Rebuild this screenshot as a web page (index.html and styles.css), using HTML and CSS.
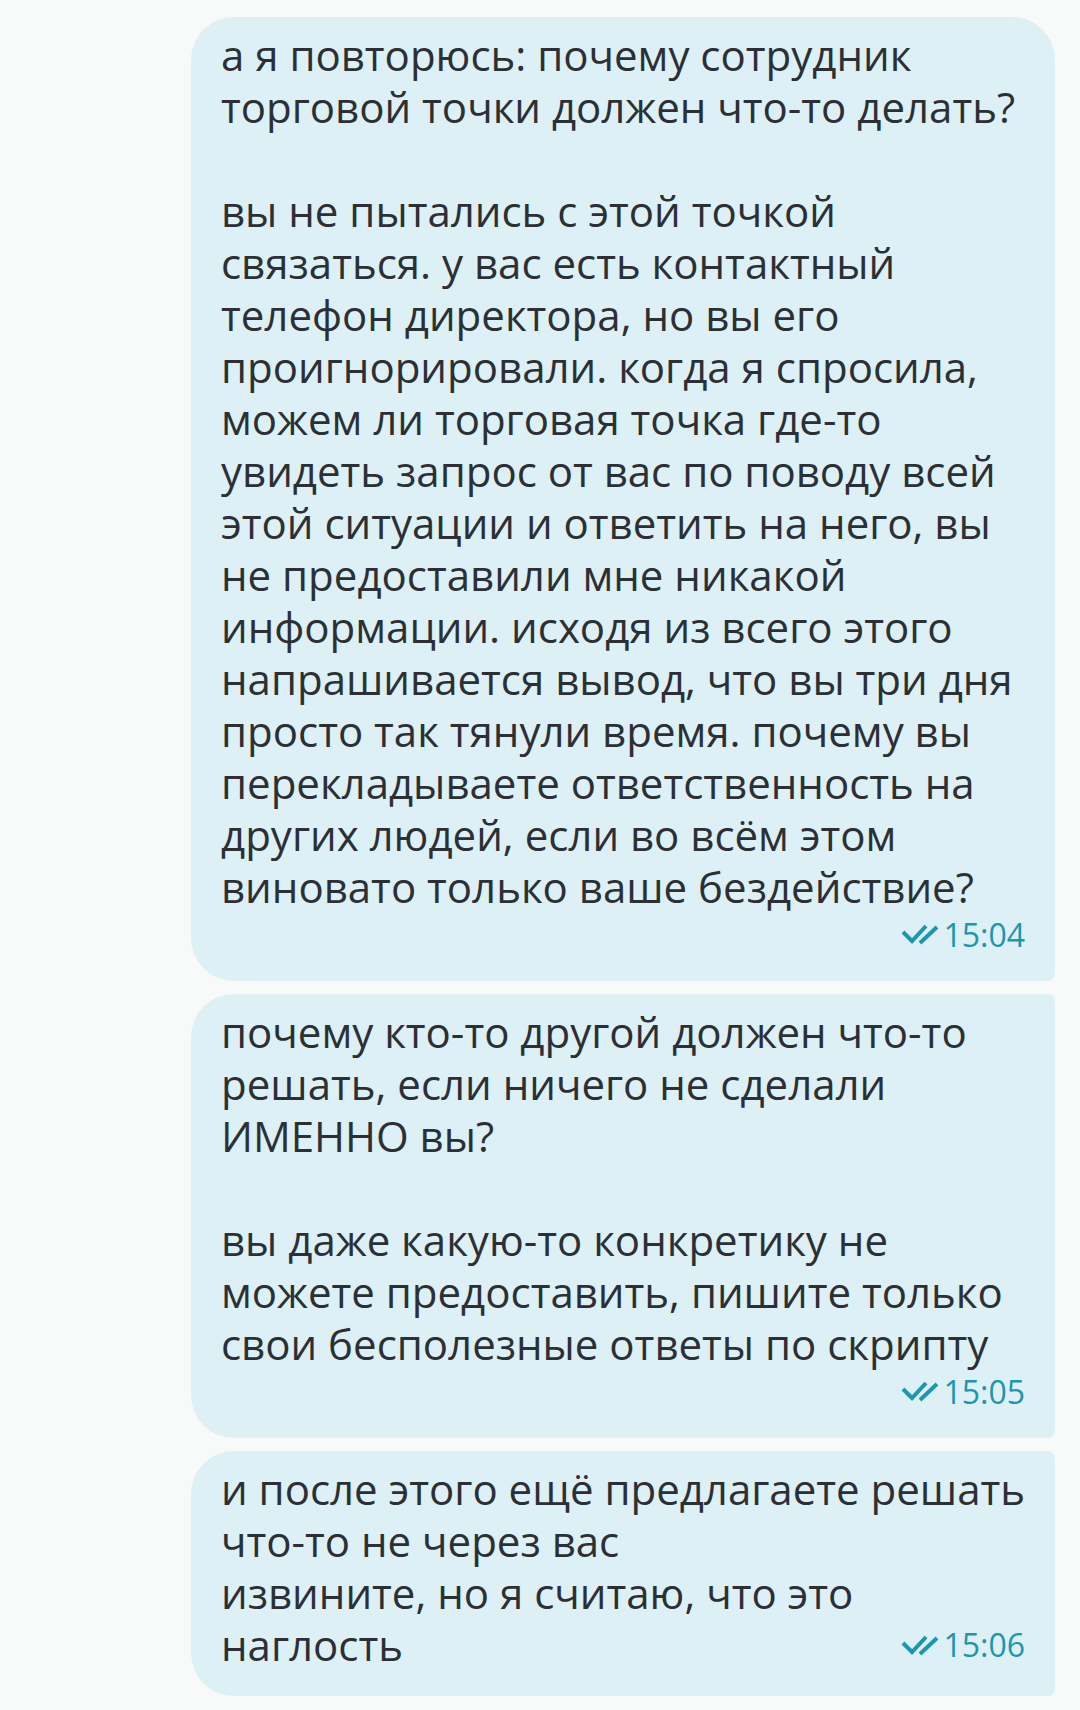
FILE: index.html
```html
<!DOCTYPE html>
<html lang="ru">

<head>
    <meta charset="UTF-8">
    <meta name="viewport" content="width=device-width, initial-scale=1.0">
    <title>Чат</title>
    <link rel="stylesheet" href="styles.css">
</head>

<body>
    <main class="chat">

        <div class="msg msg-first">
            <p class="msg-text">а я повторюсь: почему сотрудник торговой точки должен что-то делать?

вы не пытались с этой точкой связаться. у вас есть контактный телефон директора, но вы его проигнорировали. когда я спросила, можем ли торговая точка где-то увидеть запрос от вас по поводу всей этой ситуации и ответить на него, вы не предоставили мне никакой информации. исходя из всего этого напрашивается вывод, что вы три дня просто так тянули время. почему вы перекладываете ответственность на других людей, если во всём этом виновато только ваше бездействие?</p>
            <div class="msg-meta">
                <svg class="msg-check" viewBox="0 0 38 22" width="38" height="22">
                    <path d="M2 9 L11 18 L25 3 M19 20 L36 4" />
                </svg>
                <span>15:04</span>
            </div>
        </div>

        <div class="msg">
            <p class="msg-text">почему кто-то другой должен что-то решать, если ничего не сделали ИМЕННО вы?

вы даже какую-то конкретику не можете предоставить, пишите только свои бесполезные ответы по скрипту</p>
            <div class="msg-meta">
                <svg class="msg-check" viewBox="0 0 38 22" width="38" height="22">
                    <path d="M2 9 L11 18 L25 3 M19 20 L36 4" />
                </svg>
                <span>15:05</span>
            </div>
        </div>

        <div class="msg msg-short">
            <p class="msg-text"><span>и после этого ещё предлагаете решать</span>
<span>что-то не через вас</span>
<span>извините, но я считаю, что это наглость</span><span class="msg-meta msg-meta-inline"><svg class="msg-check" viewBox="0 0 38 22" width="38" height="22"><path d="M2 9 L11 18 L25 3 M19 20 L36 4" /></svg><span>15:06</span></span></p>
        </div>

    </main>
</body>

</html>
```

FILE: styles.css
```css
/* chat thread, outgoing messages only */
body {
    margin: 0;
    background: #f8f9f9;
    font-family: "Open Sans", "Noto Sans", sans-serif;
}

.chat {
    display: flex;
    flex-direction: column;
    align-items: flex-end;
    gap: 13px;
    padding: 17px 25px 14px;
}

.msg {
    box-sizing: border-box;
    width: 864px;
    padding: 12px 14px 26px 30px;
    background: #dcf0f6;
    border-radius: 43px 8px 8px 43px;
}

.msg-first {
    border-top-right-radius: 43px;
}

.msg-short {
    padding-bottom: 25px;
}

.msg-text {
    margin: 0;
    font-size: 42px;
    line-height: 52px;
    color: #2c3034;
    white-space: pre-line;
}

.msg-meta {
    display: flex;
    justify-content: flex-end;
    align-items: center;
    gap: 4px;
    height: 42px;
    padding-right: 16px;
    color: #1d97ad;
    font-size: 32px;
}

.msg-meta-inline {
    float: right;
    height: 52px;
    margin-left: 20px;
}

.msg-check {
    fill: none;
    stroke: #1d97ad;
    stroke-width: 4;
    stroke-linecap: butt;
}
```
